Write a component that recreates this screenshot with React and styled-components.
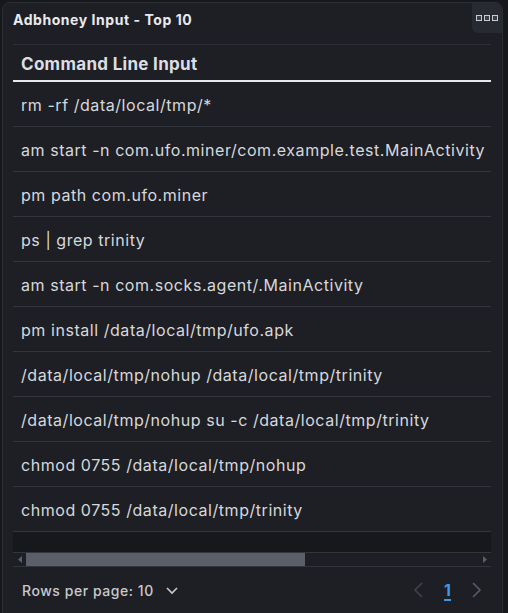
import React from "react";
import styled, { createGlobalStyle } from "styled-components";

const Global = createGlobalStyle`
  html, body { margin: 0; padding: 0; background: #17181c; }
  body { font-family: Inter, "Noto Sans", sans-serif; overflow: hidden; }
`;

const Panel = styled.div`
  margin: 2px 0 0 2px;
  width: 499px;
  height: 640px;
  background: #1e1f24;
  border: 1px solid #2c2e35;
  border-radius: 8px;
  display: flex;
  flex-direction: column;
  position: relative;
  box-sizing: content-box;
`;

const TitleBar = styled.div`
  height: 41px;
  display: flex;
  align-items: flex-start;
  padding: 0 10px;
`;

const Title = styled.h2`
  margin: 8px 0 0 0;
  font-size: 14px;
  font-weight: 700;
  color: #e8eaee;
  letter-spacing: 0.55px;
`;

const MenuButton = styled.button`
  position: absolute;
  top: 0;
  right: 0;
  width: 30px;
  height: 30px;
  border: none;
  background: #282a32;
  border-radius: 0 8px 0 6px;
  display: flex;
  align-items: center;
  justify-content: center;
  gap: 2px;
  padding: 0;
  cursor: pointer;
`;

const Dot = styled.span`
  width: 4px;
  height: 4px;
  border: 1.5px solid #c9ccd3;
  box-sizing: content-box;
  background: #3a3d45;
`;

const TableArea = styled.div`
  margin: 0 11px 0 10px;
  display: flex;
  flex-direction: column;
`;

const Scroller = styled.div`
  height: 507px;
  overflow: hidden;
  background: #17181c;
  border-top: 1px solid #2c2e35;
  border-bottom: 1px solid #34363d;
`;

const Table = styled.table`
  width: 775px;
  border-collapse: collapse;
  background: #1e1f24;
`;

const HeadCell = styled.th`
  height: 32px;
  padding: 3px 8px 0;
  box-sizing: content-box;
  text-align: left;
  font-size: 17px;
  font-weight: 700;
  letter-spacing: 0.3px;
  color: #dcdee3;
  border-bottom: 2px solid #e6e8ee;
  white-space: nowrap;
`;

const Cell = styled.td`
  height: 43px;
  padding: 1px 8px 0;
  box-sizing: content-box;
  font-size: 16px;
  font-weight: 400;
  letter-spacing: 0.55px;
  color: #d6d8dc;
  border-bottom: 1px solid #34363d;
  white-space: nowrap;
`;

const ScrollBar = styled.div`
  height: 13px;
  display: flex;
  background: #1e1f24;
  border-bottom: 1px solid #34363d;
`;

const ScrollButton = styled.div`
  width: 13px;
  flex: none;
  display: flex;
  align-items: center;
  justify-content: center;
`;

const Track = styled.div`
  flex: 1;
  display: flex;
`;

const Thumb = styled.div`
  background: #5a5f6a;
  height: 100%;
`;

const Footer = styled.div`
  height: 46px;
  display: flex;
  align-items: center;
  justify-content: space-between;
  padding: 0 19px 0 19px;
`;

const RowsPer = styled.div`
  display: flex;
  align-items: center;
  gap: 11px;
  font-size: 14px;
  font-weight: 500;
  letter-spacing: 0.55px;
  color: #c8cace;
`;

const Pager = styled.div`
  display: flex;
  align-items: center;
  gap: 18px;
`;

const PageNum = styled.span`
  font-size: 16px;
  font-weight: 700;
  color: #3d9ae8;
  text-decoration: underline;
  text-underline-offset: 3px;
  text-decoration-thickness: 2px;
`;

const Chevron = ({ dir, color }) => (
  <svg width="14" height="18" viewBox="0 0 14 18" fill="none" stroke={color} strokeWidth="1.6">
    {dir === "left" ? <path d="M10 2 L3 9 L10 16" /> : <path d="M4 2 L11 9 L4 16" />}
  </svg>
);

const Arrow = ({ dir }) => (
  <svg width="6" height="7" viewBox="0 0 6 7">
    {dir === "left" ? <path d="M5 0 L1 3.5 L5 7 Z" fill="#5a5e67" /> : <path d="M1 0 L5 3.5 L1 7 Z" fill="#5a5e67" />}
  </svg>
);

const rows = [
  "rm -rf /data/local/tmp/*",
  "am start -n com.ufo.miner/com.example.test.MainActivity",
  "pm path com.ufo.miner",
  "ps | grep trinity",
  "am start -n com.socks.agent/.MainActivity",
  "pm install /data/local/tmp/ufo.apk",
  "/data/local/tmp/nohup /data/local/tmp/trinity",
  "/data/local/tmp/nohup su -c /data/local/tmp/trinity",
  "chmod 0755 /data/local/tmp/nohup",
  "chmod 0755 /data/local/tmp/trinity",
];

const thumbRatio = 0.617;

export default function App() {
  return (
    <>
      <Global />
      <Panel>
        <TitleBar>
          <Title>Adbhoney Input - Top 10</Title>
        </TitleBar>
        <MenuButton aria-label="menu">
          <Dot />
          <Dot />
          <Dot />
        </MenuButton>
        <TableArea>
          <Scroller>
            <Table>
              <thead>
                <tr>
                  <HeadCell>Command Line Input</HeadCell>
                </tr>
              </thead>
              <tbody>
                {rows.map((r) => (
                  <tr key={r}>
                    <Cell>{r}</Cell>
                  </tr>
                ))}
              </tbody>
            </Table>
          </Scroller>
          <ScrollBar>
            <ScrollButton>
              <Arrow dir="left" />
            </ScrollButton>
            <Track>
              <Thumb style={{ width: `${thumbRatio * 100}%` }} />
            </Track>
            <ScrollButton>
              <Arrow dir="right" />
            </ScrollButton>
          </ScrollBar>
        </TableArea>
        <Footer>
          <RowsPer>
            Rows per page: 10
            <svg width="14" height="10" viewBox="0 0 14 10" fill="none" stroke="#c8cace" strokeWidth="1.6">
              <path d="M2 3 L7 8 L12 3" />
            </svg>
          </RowsPer>
          <Pager>
            <Chevron dir="left" color="#40434b" />
            <PageNum>1</PageNum>
            <Chevron dir="right" color="#595c65" />
          </Pager>
        </Footer>
      </Panel>
    </>
  );
}
